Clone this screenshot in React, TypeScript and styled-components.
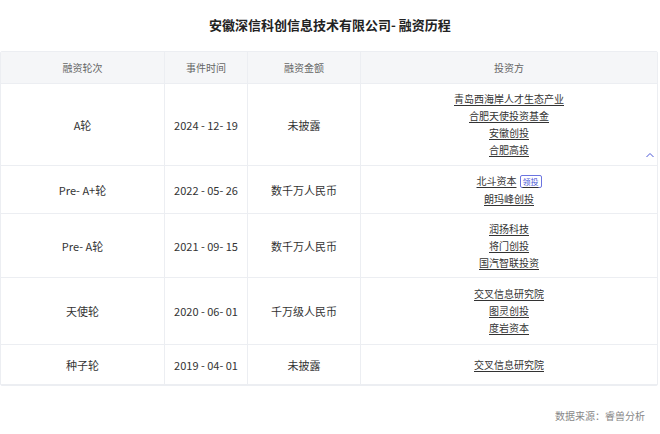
import React from "react";
import styled, { createGlobalStyle } from "styled-components";

const G = createGlobalStyle`
  body { margin: 0; background: #fff; font-family: "Noto Sans CJK SC", "Noto Sans", sans-serif; }
`;
const Page = styled.div`width: 660px; height: 434px; display: flex; flex-direction: column;`;
const Title = styled.div`height: 51px; display: flex; align-items: center; justify-content: center; font-size: 13px; font-weight: 700; color: #222; padding-bottom: 2px; box-sizing: border-box;`;
const Table = styled.div`margin: 0 2px 0 0; border: 1px solid #eceef2; border-radius: 2px; display: grid; grid-template-columns: 164px 83px 113px 1fr; position: relative;`;
const Cell = styled.div<{ $h?: boolean; $last?: boolean }>`
  display: flex; flex-direction: column; align-items: center; justify-content: center;
  font-size: 11px; color: ${p => (p.$h ? "#666" : "#333")};
  background: ${p => (p.$h ? "#f5f6f8" : "#fff")};
  border-right: ${p => (p.$last ? "none" : "1px solid #eceef2")};
  border-bottom: 1px solid #eceef2;
  font-size: ${p => (p.$h ? "10px" : "11px")};
  gap: 5px;
`;
const Link = styled.span`font-size: 10px; color: #333; text-decoration: underline; text-underline-offset: 2px; line-height: 12px; display: flex; align-items: center; gap: 3px;`;
const Tag = styled.span`font-size: 8px; color: #4b57d8; border: 1px solid #6b74e0; border-radius: 2px; padding: 0 2px; line-height: 11px; text-decoration: none; display: inline-block;`;
const Chev = styled.svg`position: absolute; right: 2px; top: 99px;`;
const Foot = styled.div`text-align: right; padding: 22px 15px 0 0; font-size: 10px; color: #888;`;

const rows = [
  { r: "A轮", d: "2024 - 12- 19", a: "未披露", i: ["青岛西海岸人才生态产业", "合肥天使投资基金", "安徽创投", "合肥高投"], h: 81 },
  { r: "Pre- A+轮", d: "2022 - 05- 26", a: "数千万人民币", i: ["北斗资本", "朗玛峰创投"], h: 47, lead: true },
  { r: "Pre- A轮", d: "2021 - 09- 15", a: "数千万人民币", i: ["润扬科技", "将门创投", "国汽智联投资"], h: 63 },
  { r: "天使轮", d: "2020 - 06- 01", a: "千万级人民币", i: ["交叉信息研究院", "图灵创投", "度岩资本"], h: 66 },
  { r: "种子轮", d: "2019 - 04- 01", a: "未披露", i: ["交叉信息研究院"], h: 39 },
];

export default function App() {
  return (
    <Page>
      <G />
      <Title>安徽深信科创信息技术有限公司- 融资历程</Title>
      <Table>
        {["融资轮次", "事件时间", "融资金额", "投资方"].map((t, k) => (
          <Cell key={t} $h $last={k === 3} style={{ height: 31 }}>{t}</Cell>
        ))}
        {rows.map((r, k) => (
          <React.Fragment key={k}>
            <Cell style={{ height: r.h }}>{r.r}</Cell>
            <Cell style={{ height: r.h }}>{r.d}</Cell>
            <Cell style={{ height: r.h }}>{r.a}</Cell>
            <Cell $last style={{ height: r.h }}>
              {r.i.map((n, j) => (
                <Link key={n}>{n}{r.lead && j === 0 && <Tag>领投</Tag>}</Link>
              ))}
            </Cell>
          </React.Fragment>
        ))}
        <Chev width="10" height="8" viewBox="0 0 10 8"><path d="M1.5 6 L5 2.5 L8.5 6" fill="none" stroke="#4b57d8" strokeWidth="1" /></Chev>
      </Table>
      <Foot>数据来源：睿兽分析</Foot>
    </Page>
  );
}
